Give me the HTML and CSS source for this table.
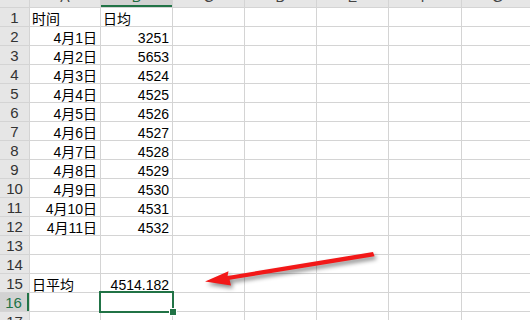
FILE: index.html
```html
<!DOCTYPE html>
<html lang="zh">
<head>
<meta charset="utf-8">
<link rel="stylesheet" href="styles.css">
</head>
<body>
<div class="viewport">
  <div class="sheet">
    <div class="corner"></div>
    <div class="colhdr">A</div>
    <div class="colhdr sel">B</div>
    <div class="colhdr">C</div>
    <div class="colhdr">D</div>
    <div class="colhdr">E</div>
    <div class="colhdr">F</div>
    <div class="colhdr">G</div>

    <div class="rowhdr">1</div><div class="cell">时间</div><div class="cell">日均</div><div class="cell"></div><div class="cell"></div><div class="cell"></div><div class="cell"></div><div class="cell"></div>
    <div class="rowhdr">2</div><div class="cell r">4月1日</div><div class="cell r">3251</div><div class="cell"></div><div class="cell"></div><div class="cell"></div><div class="cell"></div><div class="cell"></div>
    <div class="rowhdr">3</div><div class="cell r">4月2日</div><div class="cell r">5653</div><div class="cell"></div><div class="cell"></div><div class="cell"></div><div class="cell"></div><div class="cell"></div>
    <div class="rowhdr">4</div><div class="cell r">4月3日</div><div class="cell r">4524</div><div class="cell"></div><div class="cell"></div><div class="cell"></div><div class="cell"></div><div class="cell"></div>
    <div class="rowhdr">5</div><div class="cell r">4月4日</div><div class="cell r">4525</div><div class="cell"></div><div class="cell"></div><div class="cell"></div><div class="cell"></div><div class="cell"></div>
    <div class="rowhdr">6</div><div class="cell r">4月5日</div><div class="cell r">4526</div><div class="cell"></div><div class="cell"></div><div class="cell"></div><div class="cell"></div><div class="cell"></div>
    <div class="rowhdr">7</div><div class="cell r">4月6日</div><div class="cell r">4527</div><div class="cell"></div><div class="cell"></div><div class="cell"></div><div class="cell"></div><div class="cell"></div>
    <div class="rowhdr">8</div><div class="cell r">4月7日</div><div class="cell r">4528</div><div class="cell"></div><div class="cell"></div><div class="cell"></div><div class="cell"></div><div class="cell"></div>
    <div class="rowhdr">9</div><div class="cell r">4月8日</div><div class="cell r">4529</div><div class="cell"></div><div class="cell"></div><div class="cell"></div><div class="cell"></div><div class="cell"></div>
    <div class="rowhdr">10</div><div class="cell r">4月9日</div><div class="cell r">4530</div><div class="cell"></div><div class="cell"></div><div class="cell"></div><div class="cell"></div><div class="cell"></div>
    <div class="rowhdr">11</div><div class="cell r">4月10日</div><div class="cell r">4531</div><div class="cell"></div><div class="cell"></div><div class="cell"></div><div class="cell"></div><div class="cell"></div>
    <div class="rowhdr">12</div><div class="cell r">4月11日</div><div class="cell r">4532</div><div class="cell"></div><div class="cell"></div><div class="cell"></div><div class="cell"></div><div class="cell"></div>
    <div class="rowhdr">13</div><div class="cell"></div><div class="cell"></div><div class="cell"></div><div class="cell"></div><div class="cell"></div><div class="cell"></div><div class="cell"></div>
    <div class="rowhdr">14</div><div class="cell"></div><div class="cell"></div><div class="cell"></div><div class="cell"></div><div class="cell"></div><div class="cell"></div><div class="cell"></div>
    <div class="rowhdr">15</div><div class="cell">日平均</div><div class="cell r">4514.182</div><div class="cell"></div><div class="cell"></div><div class="cell"></div><div class="cell"></div><div class="cell"></div>
    <div class="rowhdr active">16</div><div class="cell"></div><div class="cell selected"><span class="selbox"><span class="handle"></span></span></div><div class="cell"></div><div class="cell"></div><div class="cell"></div><div class="cell"></div><div class="cell"></div>
    <div class="rowhdr">17</div><div class="cell"></div><div class="cell"></div><div class="cell"></div><div class="cell"></div><div class="cell"></div><div class="cell"></div><div class="cell"></div>
  </div>
  <svg class="arrow" width="530" height="320" viewBox="0 0 530 320">
    <path d="M373 252 L374.6 256.2 L229.6 279.8 L231 285.5 L205 281.5 L228.5 271.3 L227.6 275.9 Z"/>
  </svg>
</div>
</body>
</html>
```

FILE: styles.css
```css
html, body {
  margin: 0;
  padding: 0;
  background: #ffffff;
}

.viewport {
  position: relative;
  width: 530px;
  height: 320px;
  overflow: hidden;
  font-family: "Liberation Sans", "Noto Sans CJK SC", sans-serif;
  font-size: 14px;
  color: #000;
}

.sheet {
  display: grid;
  grid-template-columns: 29px 70px 71px 71px 71px 71px 72px 71px;
  grid-template-rows: 19px repeat(17, 18px);
  gap: 1px;
  background: #d4d4d4;
  margin-top: -12px;
  width: 533px;
}

.corner,
.colhdr,
.rowhdr {
  background: #e6e6e6;
  color: #444;
  display: flex;
  align-items: flex-end;
  justify-content: center;
}

.colhdr {
  font-size: 14px;
  line-height: 14px;
  padding-bottom: 3px;
  box-sizing: border-box;
}

.colhdr.sel {
  background: #d2d2d2;
  color: #1e6b40;
  border-bottom: 2px solid #217346;
  padding-bottom: 1px;
}

.rowhdr {
  font-size: 15px;
  line-height: 15px;
  padding-bottom: 1px;
  box-sizing: border-box;
  color: #333;
}

.rowhdr.active {
  background: #d2d2d2;
  color: #217346;
  border-right: 2px solid #217346;
}

.cell {
  background: #fff;
  display: flex;
  align-items: flex-end;
  line-height: 14px;
  padding: 0 2px 0 2px;
  white-space: nowrap;
  overflow: visible;
}

.cell.r {
  justify-content: flex-end;
  padding-right: 3px;
}

.cell.selected {
  position: relative;
}

.selbox {
  position: absolute;
  left: -2px;
  top: -2px;
  right: -2px;
  bottom: -2px;
  border: 2px solid #217346;
  z-index: 2;
}

.handle {
  position: absolute;
  right: -5px;
  bottom: -5px;
  width: 6px;
  height: 6px;
  background: #217346;
  border: 1px solid #fff;
}

.arrow {
  position: absolute;
  left: 0;
  top: 0;
  fill: #f21818;
  filter: drop-shadow(2px 3px 2px rgba(0, 0, 0, 0.45));
}
```
